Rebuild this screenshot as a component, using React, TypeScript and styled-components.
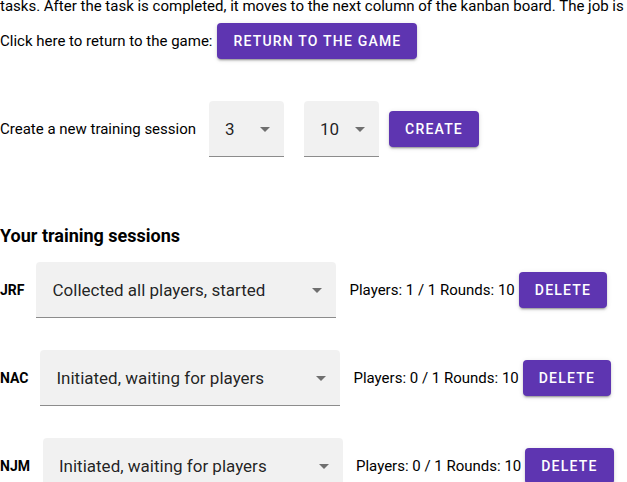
import React from "react";
import styled, { createGlobalStyle } from "styled-components";

const GlobalStyle = createGlobalStyle`
  html, body {
    margin: 0;
    padding: 0;
    background: #ffffff;
    overflow: hidden;
  }
  body {
    font-family: Roboto, "Liberation Sans", Arial, sans-serif;
    color: rgba(0, 0, 0, 0.87);
  }
`;

const Page = styled.div`
  display: flex;
  flex-direction: column;
  width: 627px;
  height: 482px;
  overflow: hidden;
`;

const Intro = styled.p`
  margin: -6px 0 0 0;
  font-size: 15px;
  line-height: 24px;
  white-space: nowrap;
  color: #000;
`;

const Row = styled.div<{ $top: number }>`
  display: flex;
  align-items: center;
  margin-top: ${(p) => p.$top}px;
  font-size: 15px;
  color: #000;
`;

const Label = styled.span<{ $gap: number }>`
  margin-right: ${(p) => p.$gap}px;
  white-space: nowrap;
`;

const Button = styled.button`
  display: inline-flex;
  align-items: center;
  justify-content: center;
  height: 36px;
  padding: 0 16px;
  border: none;
  border-radius: 4px;
  background: #5e35b1;
  color: #fff;
  font-family: Roboto, "Liberation Sans", Arial, sans-serif;
  font-size: 14px;
  font-weight: 500;
  letter-spacing: 1.2px;
  text-transform: uppercase;
  box-shadow: 0px 3px 1px -2px rgba(0, 0, 0, 0.2),
    0px 2px 2px 0px rgba(0, 0, 0, 0.14), 0px 1px 5px 0px rgba(0, 0, 0, 0.12);
  cursor: pointer;
  flex-shrink: 0;
`;

const SelectBox = styled.div<{ $width: number; $right: number }>`
  position: relative;
  display: flex;
  align-items: center;
  box-sizing: border-box;
  width: ${(p) => p.$width}px;
  height: 56px;
  margin-right: ${(p) => p.$right}px;
  padding: 0 32px 0 16px;
  background: rgba(0, 0, 0, 0.055);
  border-bottom: 1px solid rgba(0, 0, 0, 0.42);
  border-radius: 4px 4px 0 0;
  font-size: 17px;
  color: rgba(0, 0, 0, 0.87);
  white-space: nowrap;
  flex-shrink: 0;
`;

const Arrow = styled.svg`
  position: absolute;
  right: 7px;
  top: 50%;
  width: 24px;
  height: 24px;
  margin-top: -12px;
  fill: rgba(0, 0, 0, 0.54);
`;

const Heading = styled.h2`
  margin: 67px 0 0 0;
  font-size: 18px;
  font-weight: 700;
  line-height: 24px;
  color: #000;
`;

const SessionList = styled.div`
  display: flex;
  flex-direction: column;
  gap: 32px;
  margin-top: 14px;
`;

const SessionRow = styled.div`
  display: flex;
  align-items: center;
`;

const Code = styled.span<{ $gap: number }>`
  font-size: 14px;
  font-weight: 700;
  margin-right: ${(p) => p.$gap}px;
  color: #000;
`;

const Info = styled.span`
  font-size: 15px;
  margin-right: 4px;
  color: #000;
  white-space: nowrap;
`;

const Select: React.FC<{ value: string; width: number; right?: number }> = ({
  value,
  width,
  right = 0,
}) => (
  <SelectBox $width={width} $right={right}>
    {value}
    <Arrow viewBox="0 0 24 24">
      <path d="M7 10l5 5 5-5z" />
    </Arrow>
  </SelectBox>
);

const sessions = [
  { code: "JRF", gap: 12, status: "Collected all players, started", players: "1 / 1", rounds: 10 },
  { code: "NAC", gap: 12, status: "Initiated, waiting for players", players: "0 / 1", rounds: 10 },
  { code: "NJM", gap: 13, status: "Initiated, waiting for players", players: "0 / 1", rounds: 10 },
];

export default function App() {
  return (
    <>
      <GlobalStyle />
      <Page>
        <Intro>
          tasks. After the task is completed, it moves to the next column of the kanban board. The job is completed when it reaches the last column.
        </Intro>
        <Row $top={5}>
          <Label $gap={5}>Click here to return to the game:</Label>
          <Button>Return to the game</Button>
        </Row>
        <Row $top={42}>
          <Label $gap={13}>Create a new training session</Label>
          <Select value="3" width={75} right={20} />
          <Select value="10" width={75} right={10} />
          <Button>Create</Button>
        </Row>
        <Heading>Your training sessions</Heading>
        <SessionList>
          {sessions.map((s) => (
            <SessionRow key={s.code}>
              <Code $gap={s.gap}>{s.code}</Code>
              <Select value={s.status} width={300} right={13} />
              <Info>
                Players: {s.players} Rounds: {s.rounds}
              </Info>
              <Button>Delete</Button>
            </SessionRow>
          ))}
        </SessionList>
      </Page>
    </>
  );
}
